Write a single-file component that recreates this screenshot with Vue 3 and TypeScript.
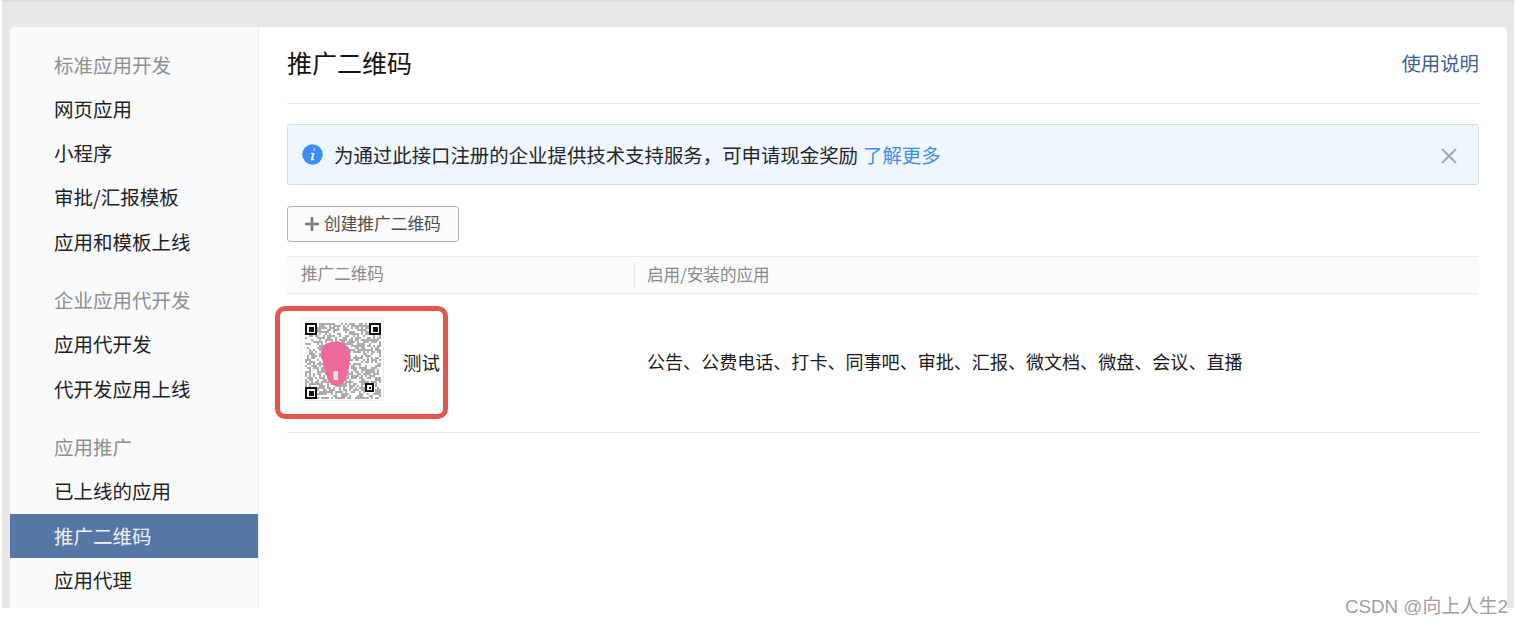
<script setup lang="ts">
interface Group { title: string; items: string[] }
const groups: Group[] = [
  { title: '标准应用开发', items: ['网页应用', '小程序', '审批/汇报模板', '应用和模板上线'] },
  { title: '企业应用代开发', items: ['应用代开发', '代开发应用上线'] },
  { title: '应用推广', items: ['已上线的应用', '推广二维码', '应用代理'] },
]
const activeItem = '推广二维码'

const N = 38
const cells: { x: number; y: number }[] = []
let seed = 12345
const rnd = () => {
  seed = (seed * 1103515245 + 12345) & 0x7fffffff
  return (seed >> 12) % 100
}
const inFinder = (x: number, y: number) =>
  (x < 6 && y < 6) || (x >= N - 6 && y < 6) || (x < 6 && y >= N - 6) ||
  (x >= 30 && x < 35 && y >= 30 && y < 35)
for (let y = 0; y < N; y++) {
  for (let x = 0; x < N; x++) {
    if (!inFinder(x, y) && rnd() < 54) cells.push({ x: x * 2, y: y * 2 })
  }
}
</script>

<template>
  <div class="page">
    <div class="frame">
      <div class="card">
        <aside class="side">
          <section v-for="g in groups" :key="g.title" class="group">
            <div class="group-title">{{ g.title }}</div>
            <div
              v-for="it in g.items"
              :key="it"
              class="side-item"
              :class="{ active: it === activeItem }"
            ><span class="side-label">{{ it }}</span></div>
          </section>
        </aside>

        <main class="main">
          <header class="head">
            <h1 class="title">推广二维码</h1>
            <a class="help">使用说明</a>
          </header>

          <div class="alert">
            <svg class="info" width="21" height="21" viewBox="0 0 21 21">
              <circle cx="10.5" cy="10.5" r="10.2" fill="#3d8df2" />
              <path d="M11.8 4.6h1.2l-.3 1.8h-1.2zM9 8.9h3.2l-1.3 6.2h1.3l-.3 1.1H8.8l1.4-6.3H8.8z" fill="#fff" />
            </svg>
            <span class="alert-text">为通过此接口注册的企业提供技术支持服务，可申请现金奖励</span>
            <a class="more">了解更多</a>
            <svg class="close" width="16" height="16" viewBox="0 0 16 16">
              <path d="M1 1l14 14M15 1L1 15" stroke="#9aa8bd" stroke-width="2" fill="none" />
            </svg>
          </div>

          <button class="create" type="button">
            <svg width="14" height="14" viewBox="0 0 14 14">
              <path d="M7 0v14M0 7h14" stroke="#7b7b7b" stroke-width="2.6" fill="none" />
            </svg>
            <span class="create-label">创建推广二维码</span>
          </button>

          <div class="thead">
            <div class="col-a th-label">推广二维码</div>
            <div class="col-b"><span>启用/安装的应用</span></div>
          </div>

          <div class="trow">
            <div class="col-a cell-a">
              <div class="qr">
                <svg width="76" height="76" viewBox="0 0 76 76" shape-rendering="crispEdges">
                  <rect v-for="(c, i) in cells" :key="i" :x="c.x" :y="c.y" width="2" height="2" fill="#adadad" />
                  <g fill="none" stroke="#111" stroke-width="2">
                    <rect x="1" y="1" width="10" height="10" />
                    <rect x="65" y="1" width="10" height="10" />
                    <rect x="1" y="65" width="10" height="10" />
                    <rect x="61" y="61" width="7" height="7" stroke-width="1.6" />
                  </g>
                  <g fill="#111">
                    <rect x="3.500" y="3.500" width="5" height="5" />
                    <rect x="67.500" y="3.500" width="5" height="5" />
                    <rect x="3.500" y="67.500" width="5" height="5" />
                    <rect x="63.500" y="63.500" width="2" height="2" />
                  </g>
                  <path
                    shape-rendering="auto"
                    d="M17 26C18 20 26 18 34 19C41 20 45 25 45 31C45 40 44 50 39 59C36 64 28 64 24 59C21 54 20 46 18 40C16 34 16 30 17 26Z"
                    fill="#ee6a9b"
                  />
                  <rect x="28.500" y="48" width="4.500" height="9" fill="#e9dfe4" shape-rendering="auto" />
                </svg>
              </div>
              <span class="qr-name">测试</span>
            </div>
            <div class="col-b apps">公告、公费电话、打卡、同事吧、审批、汇报、微文档、微盘、会议、直播</div>
          </div>
        </main>
      </div>
    </div>

    <div class="annotation"></div>
    <div class="watermark">CSDN @向上人生2</div>
  </div>
</template>

<style>
html, body { margin: 0; background: #fff; }
</style>

<style scoped>
.page {
  position: relative;
  width: 1522px;
  height: 626px;
  overflow: hidden;
  background: #fff;
  font-family: "Noto Sans CJK SC", "Liberation Sans", sans-serif;
}
.frame {
  box-sizing: border-box;
  width: 1512px;
  height: 608px;
  margin-left: 2px;
  padding: 25px 7px 0 8px;
  background: #e8e8e8;
  border-top: 2px solid #dcdcdc;
}
.card {
  display: flex;
  height: 100%;
  background: #fff;
  border-radius: 5px 5px 0 0;
  overflow: hidden;
}
.side {
  box-sizing: border-box;
  flex: none;
  width: 249px;
  padding-top: 15.600px;
  background: #f9fafc;
  border-right: 1px dotted #dfe2e8;
}
.group { margin-bottom: 14px; }
.group-title, .side-item {
  height: 44.3px;
  line-height: 44.3px;
  padding-left: 44px;
  font-size: 19.500px;
  white-space: nowrap;
}
.group-title { color: #8f8f8f; }
.side-item { color: #1f1f1f; }
.side-item.active { color: #eef2f8; background: #5676a6; }
.main {
  flex: 1;
  min-width: 0;
  padding: 0 28px;
}
.head {
  display: flex;
  align-items: flex-start;
  justify-content: space-between;
  box-sizing: border-box;
  height: 77px;
  padding-top: 17px;
  border-bottom: 1px solid #e6e6e6;
}
.title {
  margin: 0;
  font-size: 25px;
  line-height: 36px;
  font-weight: 400;
  color: #141414;
}
.help {
  margin-top: 5px;
  font-size: 19.400px;
  line-height: 28px;
  color: #3f5f90;
}
.alert {
  display: flex;
  align-items: center;
  box-sizing: border-box;
  height: 61px;
  margin-top: 20px;
  padding: 0 21px 0 14px;
  background: #eff6fe;
  border: 1px solid #cfdcf0;
  border-radius: 3px;
}
.info { flex: none; margin-right: 11px; }
.alert-text { font-size: 19.420px; color: #262626; white-space: nowrap; }
.more { margin-left: 5px; font-size: 19.420px; color: #3f8cf0; }
.close { margin-left: auto; margin-top: 2px; }
.create {
  display: flex;
  align-items: center;
  gap: 5px;
  box-sizing: border-box;
  width: 172px;
  height: 36px;
  margin-top: 21px;
  padding: 0 0 0 17px;
  background: #fbfbfb;
  border: 1px solid #b4b4b4;
  border-radius: 3px;
  font-family: inherit;
  font-size: 16.700px;
  color: #4e4e4e;
}
.create-label { margin-bottom: 3px; }
.thead {
  display: flex;
  align-items: center;
  box-sizing: border-box;
  height: 38px;
  margin-top: 14px;
  background: #fafbfb;
  border-top: 1px solid #e8eaed;
  border-bottom: 1px solid #e8eaed;
  font-size: 16.600px;
  color: #8a8a8a;
}
.thead .th-label { padding-left: 14px; padding-bottom: 5px; }
.thead .col-b span {
  display: block;
  padding: 0 0 3px 12px;
  border-left: 1px solid #e6e6e6;
  line-height: 24px;
}
.col-a { box-sizing: border-box; flex: none; width: 347px; }
.col-b { flex: 1; min-width: 0; }
.trow {
  display: flex;
  align-items: center;
  box-sizing: border-box;
  height: 139px;
  border-bottom: 1px solid #e6e6e6;
}
.cell-a {
  display: flex;
  align-items: flex-start;
  height: 100%;
  padding: 24px 0 0 14px;
}
.qr {
  display: flex;
  align-items: center;
  justify-content: center;
  flex: none;
  box-sizing: border-box;
  width: 83px;
  height: 83px;
  padding-top: 2px;
  border: 1px solid #ececec;
  border-radius: 3px;
}
.qr svg { filter: blur(0.5px); }
.qr-name { margin: 30px 0 0 19px; font-size: 18.500px; line-height: 28px; color: #1a1a1a; }
.apps {
  padding: 0 0 4px 13px;
  font-size: 18.060px;
  color: #1a1a1a;
  white-space: nowrap;
}
.annotation {
  position: absolute;
  left: 275px;
  top: 306px;
  width: 173px;
  height: 113px;
  box-sizing: border-box;
  border: 5px solid #e4574f;
  border-radius: 10px;
}
.watermark {
  position: absolute;
  right: 14px;
  top: 595px;
  font-family: "Liberation Sans", "Noto Sans CJK SC", sans-serif;
  font-size: 18.800px;
  line-height: 24px;
  color: #a0a0a0;
  white-space: nowrap;
}
</style>
